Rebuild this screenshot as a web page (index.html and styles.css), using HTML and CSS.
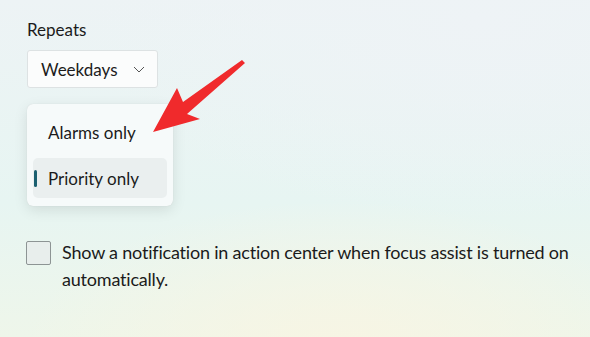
FILE: index.html
```html
<!DOCTYPE html>
<html lang="en">
<head>
    <meta charset="UTF-8">
    <title>Focus assist - Repeats</title>
    <link rel="stylesheet" href="styles.css">
</head>
<body>

<div class="page">
    <div class="field-label">Repeats</div>
    <div class="combo">
        <span>Weekdays</span>
        <svg class="chevron" width="12" height="7" viewBox="0 0 12 7">
            <path d="M1 1 L6 6 L11 1" fill="none" stroke="#555" stroke-width="1"/>
        </svg>
    </div>

    <div class="menu">
        <div class="menu-item">Alarms only</div>
        <div class="menu-item selected">Priority only</div>
    </div>

    <label class="check-row">
        <span class="box"></span>
        <span class="check-text">Show a notification in action center when focus assist is turned on<br>automatically.</span>
    </label>
</div>

<svg class="arrow" width="590" height="337" viewBox="0 0 590 337">
    <path d="M153 132 L177 88 L183 102 L242 60 L245 63 L187 114 L200 119 Z" fill="#f02a2c"/>
</svg>

</body>
</html>
```

FILE: styles.css
```css
body {
    margin: 0;
    font-family: Lato, "Noto Sans", sans-serif;
    color: #1b1b1b;
    width: 590px;
    height: 337px;
    overflow: hidden;
    background-color: #eaf4f2;
    background-image:
        radial-gradient(ellipse 320px 160px at 340px 360px, #f8f5e3, rgba(248, 245, 227, 0)),
        radial-gradient(ellipse 400px 200px at 480px 20px, #eef3f6, rgba(238, 243, 246, 0)),
        linear-gradient(180deg, #edf3f5 0%, #e7f5f2 60%, #eef6ea 100%);
    position: relative;
}
.page {
    padding: 19px 0 0 27px;
}
.field-label {
    font-size: 17px;
    line-height: 22px;
}
.combo {
    margin-top: 9px;
    background-color: #fbfcfc;
    border: 1px solid #dde2e3;
    border-radius: 3px;
    display: flex;
    align-items: center;
    padding-left: 13px;
    box-sizing: border-box;
    width: 131px;
    height: 38px;
    font-size: 17px;
}
.chevron {
    margin-left: 15px;
}
.menu {
    margin-top: 16px;
    width: 146px;
    height: 102px;
    box-sizing: border-box;
    background-color: #f6fafa;
    border-radius: 6px;
    box-shadow: 0 4px 14px rgba(0, 0, 0, 0.10), 0 0 1px rgba(0, 0, 0, 0.12);
    padding: 8px 6px 8px 6px;
}
.menu-item {
    height: 40px;
    display: flex;
    align-items: center;
    padding-left: 15px;
    font-size: 17px;
    border-radius: 5px;
    position: relative;
}
.menu-item + .menu-item {
    margin-top: 6px;
}
.menu-item.selected {
    background-color: #eaefef;
}
.menu-item.selected::before {
    content: "";
    position: absolute;
    left: 1px;
    top: 12px;
    width: 3px;
    height: 17px;
    border-radius: 2px;
    background-color: #1b6070;
}
.check-row {
    margin-top: 35px;
    margin-left: -1px;
    display: flex;
    align-items: flex-start;
}
.box {
    flex: none;
    width: 25px;
    height: 24px;
    box-sizing: border-box;
    border: 1px solid #8d9494;
    border-radius: 2px;
    background-color: #e8eeec;
}
.check-text {
    margin-left: 11px;
    margin-top: -2px;
    width: 530px;
    font-size: 18px;
    letter-spacing: -0.2px;
    line-height: 27px;
}
.arrow {
    position: absolute;
    left: 0;
    top: 0;
    pointer-events: none;
}
```
